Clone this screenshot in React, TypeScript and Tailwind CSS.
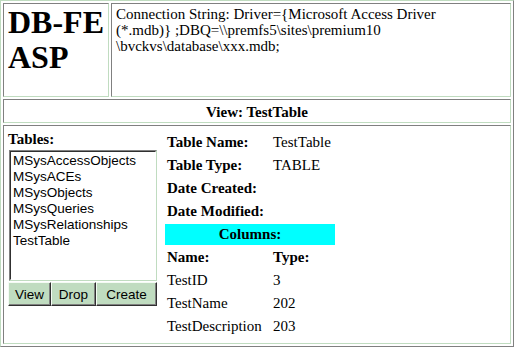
import React from "react";

const cell =
  "border border-t-[#808080] border-l-[#808080] border-r-[#c0dcc0] border-b-[#c0dcc0]";

const btn =
  "h-[24px] flex items-center justify-center bg-[#c0dcc0] border border-t-[#f4fbf4] border-l-[#f4fbf4] border-r-[#303030] border-b-[#303030] shadow-[inset_-1px_-1px_0_#808080] text-[13.5px] leading-[15px] text-black";

export default function App() {
  const tables = [
    "MSysAccessObjects",
    "MSysACEs",
    "MSysObjects",
    "MSysQueries",
    "MSysRelationships",
    "TestTable",
  ];
  const info: [string, string][] = [
    ["Table Name:", "TestTable"],
    ["Table Type:", "TABLE"],
    ["Date Created:", ""],
    ["Date Modified:", ""],
  ];
  const cols: [string, string][] = [
    ["TestID", "3"],
    ["TestName", "202"],
    ["TestDescription", "203"],
  ];
  return (
    <div className="w-[514px] h-[347px] border border-t-[#c0dcc0] border-l-[#c0dcc0] border-r-[#808080] border-b-[#808080] p-[2px] flex flex-col gap-[2px] bg-white font-['Liberation_Serif',serif] text-black">
      <div className="flex gap-[2px] h-[94px] shrink-0">
        <div className={`${cell} w-[106px] pl-[4px] pt-[1px]`}>
          <div className="text-[32px] leading-[35px] font-bold">
            DB-FE
            <br />
            ASP
          </div>
        </div>
        <div className={`${cell} flex-1 pl-[4px] pt-[2px] text-[15px] leading-[16px] whitespace-nowrap`}>
          <div>Connection String: Driver={"{"}Microsoft Access Driver</div>
          <div>(*.mdb){"}"} ;DBQ=\\premfs5\sites\premium10</div>
          <div>\bvckvs\database\xxx.mdb;</div>
        </div>
      </div>
      <div className={`${cell} h-[24px] shrink-0 text-center font-bold text-[15px] leading-[17px] pt-[4px]`}>
        View: TestTable
      </div>
      <div className={`${cell} flex-1 flex items-start`}>
        <div className="pl-[4px] pt-[5px] w-[153px] shrink-0">
          <div className="font-bold text-[15px] leading-[17px]">Tables:</div>
          <div className="mt-[2px] ml-[1px] w-[148px] h-[131px] border border-t-[#808080] border-l-[#808080] border-r-[#c0dcc0] border-b-[#c0dcc0]">
            <div className="w-full h-full border border-t-[#303030] border-l-[#303030] border-r-[#ffffff] border-b-[#ffffff] bg-white pl-[2px] pt-[1px] font-['Liberation_Sans',Arial,sans-serif] text-[13.5px] leading-[16px]">
              {tables.map((t) => (
                <div key={t}>{t}</div>
              ))}
            </div>
          </div>
          <div className="mt-[1px] flex font-['Liberation_Sans',Arial,sans-serif]">
            <div className={`${btn} w-[43px]`}>View</div>
            <div className={`${btn} w-[45px]`}>Drop</div>
            <div className={`${btn} w-[61px]`}>Create</div>
          </div>
        </div>
        <div className="ml-[8px] pt-[6px]">
          <div className="grid grid-cols-[104px_64px] gap-[2px] auto-rows-[21px] text-[15px] leading-[21px] whitespace-nowrap">
            {info.map(([k, v]) => (
              <React.Fragment key={k}>
                <div className="pl-[2px] font-bold">{k}</div>
                <div className="pl-[2px]">{v}</div>
              </React.Fragment>
            ))}
            <div className="col-span-2 bg-[#00ffff] text-center font-bold">Columns:</div>
            <div className="pl-[2px] font-bold">Name:</div>
            <div className="pl-[2px] font-bold">Type:</div>
            {cols.map(([k, v]) => (
              <React.Fragment key={k}>
                <div className="pl-[2px]">{k}</div>
                <div className="pl-[2px]">{v}</div>
              </React.Fragment>
            ))}
          </div>
        </div>
      </div>
    </div>
  );
}
